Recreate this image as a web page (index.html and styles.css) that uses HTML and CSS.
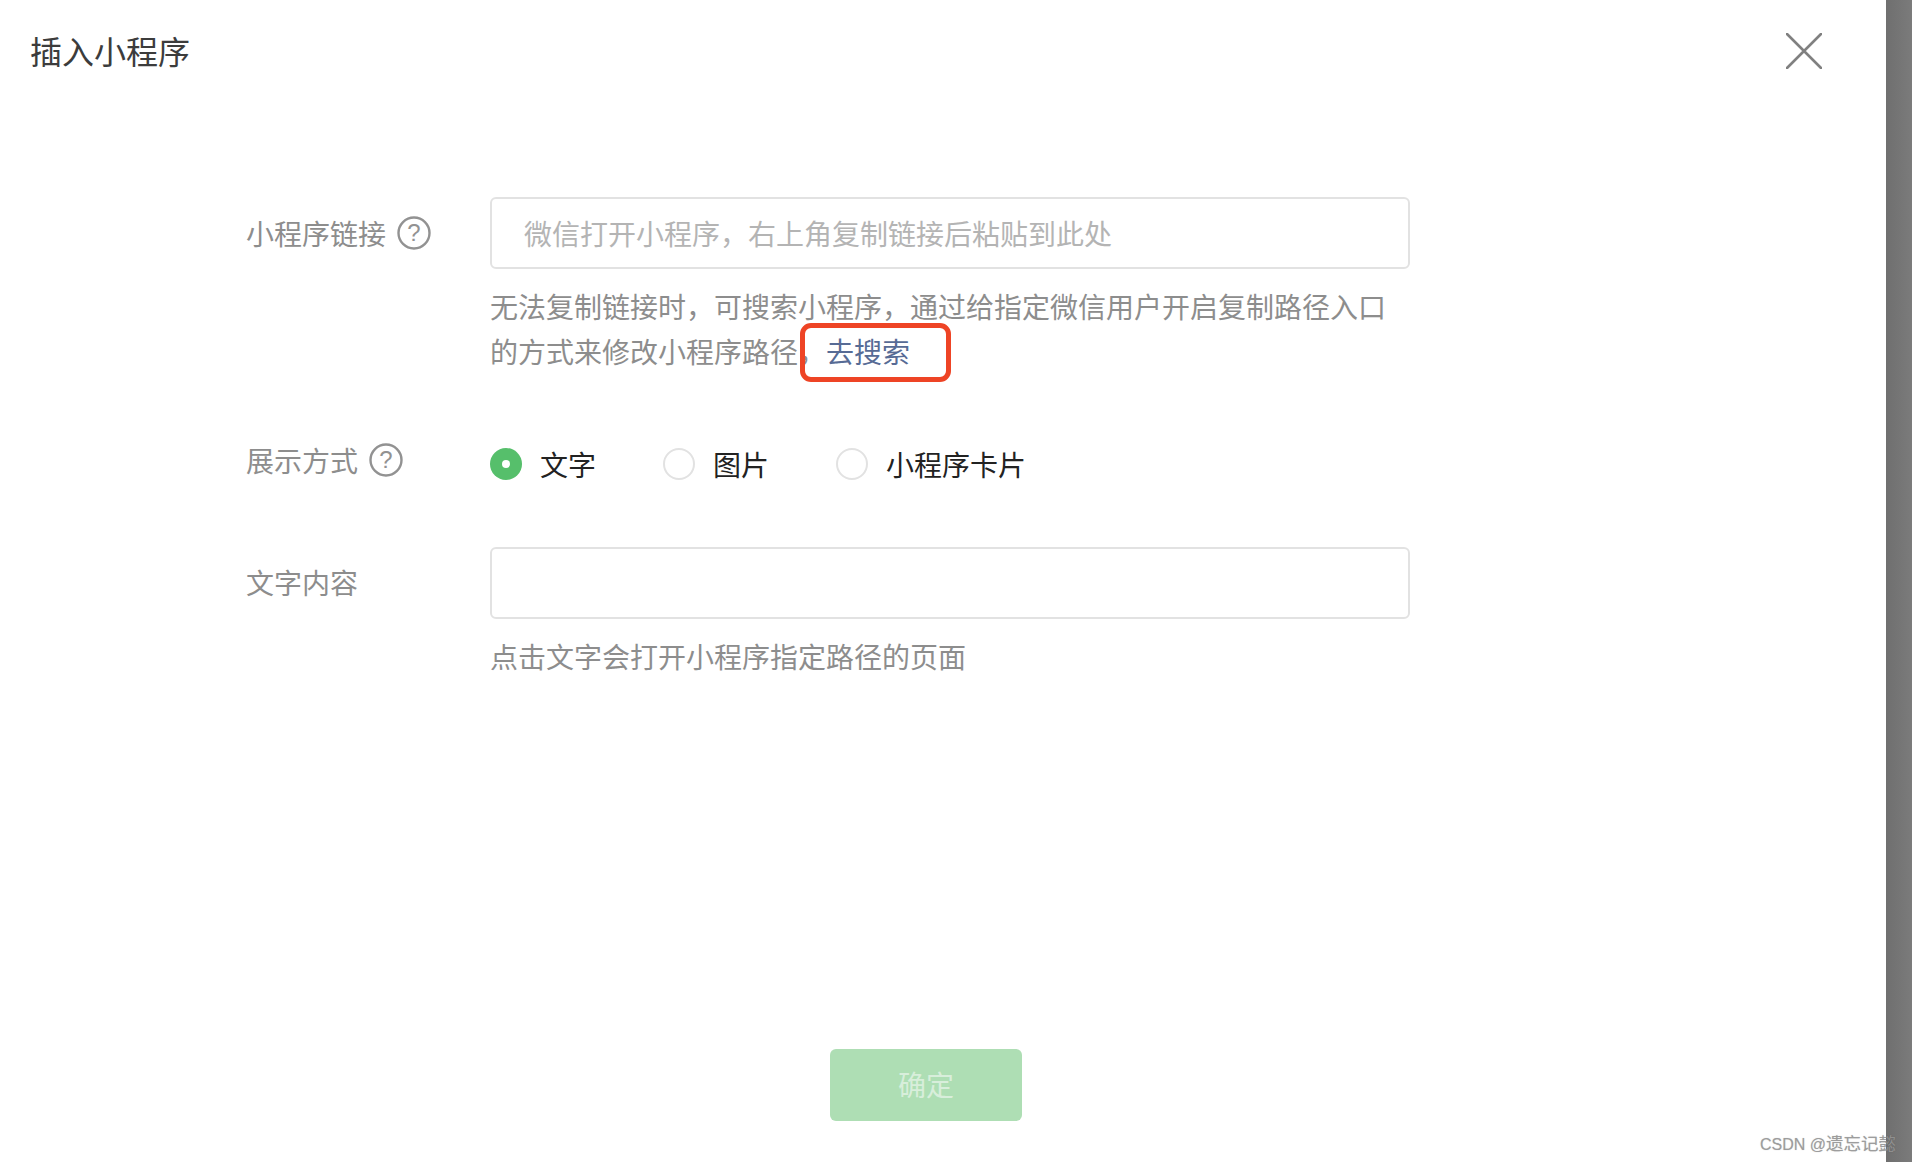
FILE: index.html
```html
<!DOCTYPE html>
<html lang="zh-CN">
<head>
<meta charset="utf-8">
<title>插入小程序</title>
<link rel="stylesheet" href="styles.css">
</head>
<body>
<div class="page">
  <main class="dialog">
    <header class="dialog-head">
      <h1 class="dialog-title">插入小程序</h1>
      <button class="close" aria-label="关闭">
        <svg width="36" height="36" viewBox="0 0 36 36"><path d="M1 1L35 35M35 1L1 35" stroke="#808080" stroke-width="2.6" stroke-linecap="round" fill="none"/></svg>
      </button>
    </header>
    <form class="form">
      <div class="row row-link">
        <div class="label"><span>小程序链接</span>
          <svg class="help" width="34" height="34" viewBox="0 0 34 34"><circle cx="17" cy="17" r="15.5" fill="none" stroke="#929292" stroke-width="2.4"/><text x="17" y="25" text-anchor="middle" class="help-mark">?</text></svg>
        </div>
        <div class="control">
          <div class="input placeholder">微信打开小程序，右上角复制链接后粘贴到此处</div>
          <p class="hint hint-link">无法复制链接时，可搜索小程序，通过给指定微信用户开启复制路径入口<br>的方式来修改小程序路径，<a class="link">去搜索</a><span class="mark"></span></p>
        </div>
      </div>
      <div class="row row-mode">
        <div class="label label-mode"><span>展示方式</span>
          <svg class="help" width="34" height="34" viewBox="0 0 34 34"><circle cx="17" cy="17" r="15.5" fill="none" stroke="#929292" stroke-width="2.4"/><text x="17" y="25" text-anchor="middle" class="help-mark">?</text></svg>
        </div>
        <div class="control radios">
          <label class="radio"><span class="dot on"></span>文字</label>
          <label class="radio"><span class="dot"></span>图片</label>
          <label class="radio"><span class="dot"></span>小程序卡片</label>
        </div>
      </div>
      <div class="row row-text">
        <div class="label label-text"><span>文字内容</span></div>
        <div class="control">
          <div class="input"></div>
          <p class="hint hint-text">点击文字会打开小程序指定路径的页面</p>
        </div>
      </div>
    </form>
    <footer class="dialog-foot">
      <button class="confirm" type="button">确定</button>
    </footer>
  </main>
  <aside class="scrim"></aside>
  <div class="watermark">CSDN @<span class="wm-name">遗忘记懿</span></div>
</div>
</body>
</html>
```
FILE: styles.css
```css
* { box-sizing: border-box; }
html, body { margin: 0; height: 100%; }
body {
  font-family: "Noto Sans CJK SC", "Liberation Sans", sans-serif;
  background: #fff;
  overflow: hidden;
}
.page { position: relative; display: flex; height: 1162px; }
.dialog { flex: 1; display: flex; flex-direction: column; min-width: 0; }
.scrim { width: 26px; background: linear-gradient(90deg, #6f6f6f, #7b7b7b); }

.dialog-head {
  height: 102px;
  display: flex;
  align-items: center;
  justify-content: space-between;
  padding: 0 64px 0 30px;
}
.dialog-title { margin: -3px 0 0; font-size: 32px; font-weight: 400; color: #3c3c3c; line-height: 44px; }
.close { width: 36px; height: 36px; padding: 0; border: 0; background: none; display: block; }
.close svg { display: block; }

.form { padding: 95px 0 0 246px; }
.row { display: flex; }
.label {
  width: 244px;
  display: flex;
  align-items: center;
  gap: 11px;
  height: 72px;
  font-size: 28px;
  color: #8d8d8d;
  line-height: 40px;
  flex: none;
}
.help { flex: none; }
.help-mark { font: 24px "Liberation Sans", sans-serif; fill: #929292; }
.control { width: 920px; }
.input {
  height: 72px;
  border: 2px solid #e2e2e2;
  border-radius: 6px;
  padding: 0 32px;
  font-size: 28px;
  line-height: 68px;
}
.placeholder { color: #b4b4b4; }
.hint { margin: 0; font-size: 28px; line-height: 45px; color: #8d8d8d; position: relative; }
.hint-link { margin-top: 15px; }
.hint-text { margin-top: 15px; }
.link { color: #576b95; }
.mark {
  position: absolute;
  left: 310px;
  top: 39px;
  width: 151px;
  height: 59px;
  border: 5px solid #ee4425;
  border-radius: 11px;
}
.row-mode { margin-top: 67px; height: 72px; }
.label-mode { height: 40px; margin-top: -1px; }
.radios { display: flex; gap: 67px; height: 40px; align-items: center; margin-top: 3px; }
.radio { display: flex; align-items: center; gap: 18px; font-size: 28px; color: #222; line-height: 40px; }
.dot {
  width: 32px;
  height: 32px;
  border-radius: 50%;
  border: 2px solid #e2e2e2;
  background: #fff;
  flex: none;
  position: relative;
}
.dot.on { border: 0; background: #56bf6b; }
.dot.on::after {
  content: "";
  position: absolute;
  left: 12px;
  top: 12px;
  width: 8px;
  height: 8px;
  border-radius: 50%;
  background: #fff;
}
.row-text { margin-top: 34px; }
.label-text { height: 70px; }

.dialog-foot { margin-top: auto; padding: 0 0 41px 830px; }
.confirm {
  display: block;
  width: 192px;
  height: 72px;
  border: 0;
  border-radius: 6px;
  background: #aedeb4;
  color: #d8eedb;
  font: 28px "Noto Sans CJK SC", sans-serif;
  padding: 0 0 2px;
}
.watermark {
  position: absolute;
  left: 1760px;
  top: 1133px;
  font-family: "Liberation Sans", "Noto Sans CJK SC", sans-serif;
  font-size: 16px;
  line-height: 22px;
  color: rgba(150,150,150,.9);
  white-space: nowrap;
  text-shadow: 0 0 1px rgba(60,60,60,.3);
}
.wm-name { font-size: 17.5px; }
```
